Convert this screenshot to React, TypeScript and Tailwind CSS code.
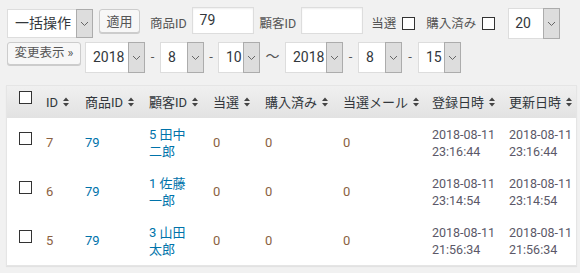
import React from "react";

const Chevron = () => (
  <svg width="9" height="6" viewBox="0 0 9 6" fill="none">
    <path d="M1 1l3.5 3.5L8 1" stroke="#666" strokeWidth="1" />
  </svg>
);

const SortIcon = () => (
  <svg width="6" height="10" viewBox="0 0 6 10" className="ml-[5px] shrink-0">
    <path d="M3 0.5L6 4H0z" fill="#444" />
    <path d="M3 9.5L6 6H0z" fill="#444" />
  </svg>
);

interface SelectProps {
  value: string;
  className: string;
  textClass?: string;
}

const FakeSelect = ({ value, className, textClass = "pl-[7px]" }: SelectProps) => (
  <div className={`flex bg-white border border-[#dddddd] ${className}`}>
    <div className={`flex-1 flex items-center text-[14px] text-[#32373c] whitespace-nowrap ${textClass}`}>
      {value}
    </div>
    <div className="w-[17px] -my-px -mr-px flex items-center justify-center bg-[#dddddd] border border-[#acacac]">
      <Chevron />
    </div>
  </div>
);

const Checkbox = ({ className = "" }: { className?: string }) => (
  <div className={`w-[13px] h-[13px] shrink-0 border border-[#333] bg-white ${className}`} />
);

const Dash = ({ className, ch = "-" }: { className: string; ch?: string }) => (
  <div className={`mt-[6px] text-center text-[13px] leading-[17px] text-[#555] ${className}`}>{ch}</div>
);

const rows = [
  { id: "7", pid: "79", cust: ["5 田中", "二郎"], time: "23:16:44" },
  { id: "6", pid: "79", cust: ["1 佐藤", "一郎"], time: "23:14:54" },
  { id: "5", pid: "79", cust: ["3 山田", "太郎"], time: "21:56:34" },
];

const headers = ["ID", "商品ID", "顧客ID", "当選", "購入済み", "当選メール", "登録日時", "更新日時"];

export default function App() {
  return (
    <div className="w-[580px] h-[273px] overflow-hidden bg-[#f1f1f1] pt-[7px] font-['Roboto','Noto_Sans_CJK_JP',sans-serif] text-[#555]">
      {/* filter row 1 */}
      <div className="flex items-start h-[35px] pl-[7px]">
        <FakeSelect value="一括操作" className="mt-[2px] h-[29px] w-[86px]" />
        <button className="ml-[6px] mt-[2px] h-[24px] w-[41px] bg-[#f7f7f7] border border-[#cccccc] rounded-[3px] shadow-[0_1px_0_#cccccc] text-[13px] leading-none text-[#555]">
          適用
        </button>
        <span className="ml-[10px] mt-[8px] text-[12.5px] leading-[17px] whitespace-nowrap">商品ID</span>
        <div className="ml-[5px] h-[27px] w-[62px] bg-white border border-[#dddddd] shadow-[inset_0_1px_2px_rgba(0,0,0,0.07)] flex items-center pl-[7px] text-[14px] text-[#32373c]">
          79
        </div>
        <span className="ml-[6px] mt-[8px] text-[12.5px] leading-[17px] whitespace-nowrap">顧客ID</span>
        <div className="ml-[5px] h-[27px] w-[62px] bg-white border border-[#dddddd] shadow-[inset_0_1px_2px_rgba(0,0,0,0.07)]" />
        <span className="ml-[8px] mt-[8px] text-[12.5px] leading-[17px] whitespace-nowrap">当選</span>
        <Checkbox className="ml-[6px] mt-[10px]" />
        <span className="ml-[11px] mt-[8px] text-[12.5px] leading-[17px] whitespace-nowrap">購入済み</span>
        <Checkbox className="ml-[6px] mt-[10px]" />
        <FakeSelect value="20" className="ml-[13px] mt-[1px] h-[31px] w-[52px]" textClass="pl-[6px]" />
      </div>

      {/* filter row 2 */}
      <div className="flex items-start h-[31px] pl-[7px]">
        <button className="h-[23px] w-[74px] bg-[#f7f7f7] border border-[#cccccc] rounded-[3px] shadow-[0_1px_0_#cccccc] text-[12.5px] leading-none text-[#555] whitespace-nowrap">
          変更表示 »
        </button>
        <FakeSelect value="2018" className="ml-[4px] h-[31px] w-[60px]" />
        <Dash className="w-[15px]" />
        <FakeSelect value="8" className="h-[31px] w-[44px]" />
        <Dash className="w-[14px]" />
        <FakeSelect value="10" className="h-[31px] w-[42px]" />
        <Dash className="w-[25px] text-[14px]" ch="〜" />
        <FakeSelect value="2018" className="h-[31px] w-[58px]" />
        <Dash className="w-[15px]" />
        <FakeSelect value="8" className="h-[31px] w-[44px]" />
        <Dash className="w-[16px]" />
        <FakeSelect value="15" className="h-[31px] w-[43px]" />
      </div>

      {/* table */}
      <div className="ml-[6px] mt-[12px] w-[571px] border border-[#e5e5e5] bg-white shadow-[0_1px_1px_rgba(0,0,0,0.06)]">
        <table className="w-full table-fixed border-collapse text-[13px]">
          <colgroup>
            <col className="w-[31px]" />
            <col className="w-[39px]" />
            <col className="w-[64px]" />
            <col className="w-[64px]" />
            <col className="w-[52px]" />
            <col className="w-[78px]" />
            <col className="w-[89px]" />
            <col className="w-[77px]" />
            <col className="w-[75px]" />
          </colgroup>
          <thead>
            <tr className="h-[32px] bg-linear-to-b from-[#f0f0f0] to-[#e2e2e2]">
              <th className="align-top pt-[5px] pl-[12px]">
                <Checkbox />
              </th>
              {headers.map((h) => (
                <th key={h} className="pl-[8px] text-left font-normal text-[#32373c] leading-[17px]">
                  <span className="flex items-center whitespace-nowrap">
                    {h}
                    <SortIcon />
                  </span>
                </th>
              ))}
            </tr>
          </thead>
          <tbody>
            {rows.map((r) => (
              <tr key={r.id}>
                <td className="align-top pt-[14px] pl-[12px]">
                  <Checkbox />
                </td>
                <td className="pl-[8px] text-[#8b6242]">{r.id}</td>
                <td className="pl-[8px] text-[#0073aa]">{r.pid}</td>
                <td className="pl-[8px] pt-[8px] pb-[7px] leading-[17px] text-[#0073aa]">
                  <div>{r.cust[0]}</div>
                  <div>{r.cust[1]}</div>
                </td>
                <td className="pl-[8px] text-[#8b6242]">0</td>
                <td className="pl-[8px] text-[#8b6242]">0</td>
                <td className="pl-[8px] text-[#8b6242]">0</td>
                <td className="pl-[8px] leading-[17px] text-[12.5px] text-[#5b5868] whitespace-nowrap">
                  <div>2018-08-11</div>
                  <div>{r.time}</div>
                </td>
                <td className="pl-[8px] leading-[17px] text-[12.5px] text-[#5b5868] whitespace-nowrap">
                  <div>2018-08-11</div>
                  <div>{r.time}</div>
                </td>
              </tr>
            ))}
          </tbody>
        </table>
      </div>
    </div>
  );
}
